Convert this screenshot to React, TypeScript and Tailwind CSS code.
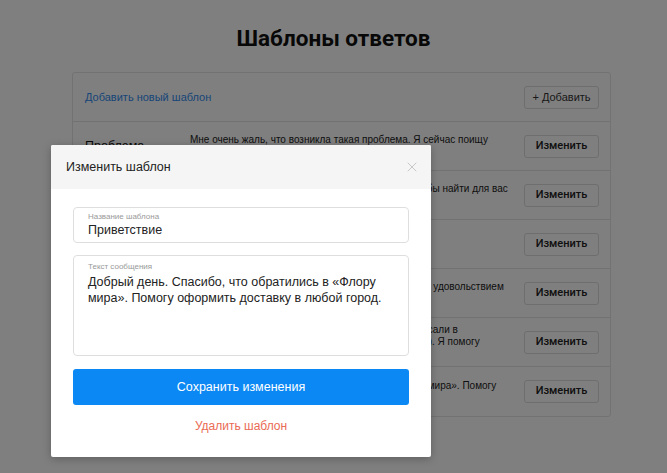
import { X } from "lucide-react";

const rows = [
  {
    title: "Проблема",
    text: "Мне очень жаль, что возникла такая проблема. Я сейчас поищу информацию и сразу вернусь к вам.",
  },
  {
    title: "Ожидание",
    text: "Одну минуту, пожалуйста. Я проверю наличие, чтобы найти для вас подходящий вариант.",
  },
  {
    title: "Прощание",
    text: "Спасибо за обращение! Хорошего дня.",
  },
  {
    title: "Благодарность",
    text: "Благодарим за заказ! Будем рады помочь снова и с удовольствием ответим на любые вопросы.",
  },
  {
    title: "Повторное",
    text: "Здравствуйте! Я вижу, что вы уже неоднократно писали в поддержку интернет-магазина цветов (Флоры мира). Я помогу разобраться с вопросом.",
  },
  {
    title: "Вечер",
    text: "Добрый вечер! Спасибо, что обратились в «Флору мира». Помогу выбрать букет и оформить доставку.",
  },
];

function TemplatesPage() {
  return (
    <div className="min-h-[473px] bg-white pt-[24px]">
      <h1 className="text-center font-['Roboto',sans-serif] text-[22.5px] font-bold leading-[28px] text-[#111]">
        Шаблоны ответов
      </h1>
      <div className="ml-[72px] mt-[20px] w-[539px] rounded-[3px] border border-[#e4e4e4]">
        <div className="flex h-[49px] items-center justify-between border-b border-[#e4e4e4] pl-[12px] pr-[11px]">
          <a className="text-[11px] text-[#2f8bf0]">Добавить новый шаблон</a>
          <button className="h-[23px] w-[75px] rounded-[3px] border border-[#dcdcdc] text-[11px] text-[#333]">
            + Добавить
          </button>
        </div>
        {rows.map((row, i) => (
          <div
            key={i}
            className={`flex h-[49px] items-center pl-[12px] pr-[11px] ${
              i < rows.length - 1 ? "border-b border-[#e4e4e4]" : ""
            }`}
          >
            <div className="w-[105px] text-[12.5px] font-medium text-[#111]">{row.title}</div>
            <div className="w-[318px] text-[10px] leading-[12px] text-[#222]">{row.text}</div>
            <button className="ml-auto h-[23px] w-[75px] rounded-[3px] border border-[#dcdcdc] font-['Roboto',sans-serif] text-[11px] font-medium text-[#222]">
              Изменить
            </button>
          </div>
        ))}
      </div>
    </div>
  );
}

function EditModal() {
  return (
    <div className="absolute left-[51px] top-[145px] w-[380px] overflow-hidden rounded-[2px] bg-white shadow-[0_2px_8px_rgba(0,0,0,0.25)]">
      <div className="flex h-[44px] items-center justify-between bg-[#f5f5f5] pl-[15px] pr-[11px]">
        <span className="text-[12.5px] text-[#222]">Изменить шаблон</span>
        <X className="h-[16px] w-[16px] text-[#b0b0b0]" strokeWidth={1} />
      </div>
      <div className="flex flex-col px-[22px] pb-[22px] pt-[18px]">
        <label className="flex h-[36px] flex-col justify-center rounded-[4px] border border-[#dedede] px-[14px]">
          <span className="text-[8px] leading-[10px] text-[#999]">Название шаблона</span>
          <span className="text-[12.5px] leading-[16px] text-[#222]">Приветствие</span>
        </label>
        <label className="mt-[12px] flex h-[101px] flex-col rounded-[4px] border border-[#dedede] px-[14px] pt-[6px]">
          <span className="text-[8px] leading-[10px] text-[#999]">Текст сообщения</span>
          <span className="mt-[2px] text-[12.5px] leading-[16px] text-[#222]">
            Добрый день. Спасибо, что обратились в «Флору мира». Помогу оформить доставку в любой город.
          </span>
        </label>
        <button className="mt-[13px] h-[36px] rounded-[3px] bg-[#0b88f4] text-[12.5px] text-white">
          Сохранить изменения
        </button>
        <button className="mt-[12px] text-[12px] leading-[18px] text-[#ea6a54]">Удалить шаблон</button>
      </div>
    </div>
  );
}

export default function App() {
  return (
    <div className="relative h-[473px] w-[667px] overflow-hidden font-['Liberation_Sans',Arial,sans-serif]">
      <TemplatesPage />
      <div className="absolute inset-0 bg-black/50" />
      <EditModal />
    </div>
  );
}
